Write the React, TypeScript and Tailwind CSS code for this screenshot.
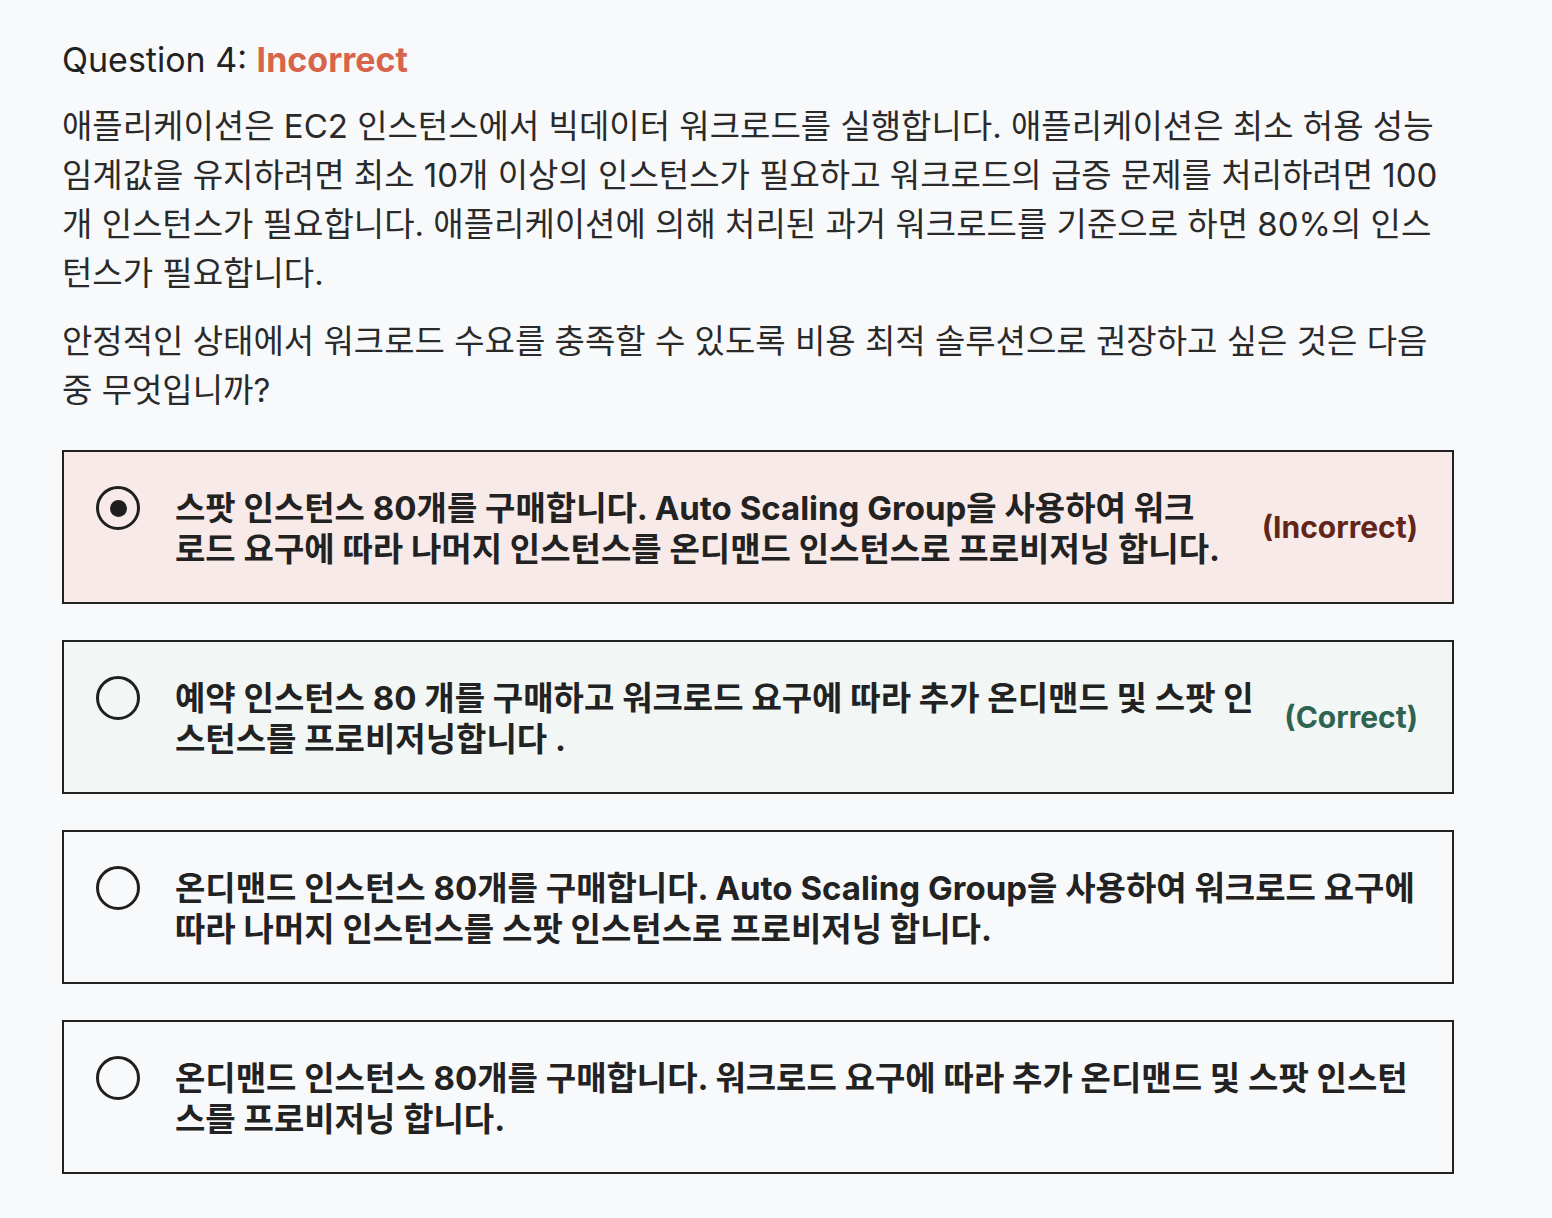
const font = { fontFamily: '"Inter", "Noto Sans CJK KR", sans-serif' };

type Option = {
  lines: string[];
  selected?: boolean;
  status?: "correct" | "incorrect";
};

const options: Option[] = [
  {
    lines: [
      "스팟 인스턴스 80개를 구매합니다. Auto Scaling Group을 사용하여 워크",
      "로드 요구에 따라 나머지 인스턴스를 온디맨드 인스턴스로 프로비저닝 합니다.",
    ],
    selected: true,
    status: "incorrect",
  },
  {
    lines: [
      "예약 인스턴스 80 개를 구매하고 워크로드 요구에 따라 추가 온디맨드 및 스팟 인",
      "스턴스를 프로비저닝합니다 .",
    ],
    status: "correct",
  },
  {
    lines: [
      "온디맨드 인스턴스 80개를 구매합니다. Auto Scaling Group을 사용하여 워크로드 요구에",
      "따라 나머지 인스턴스를 스팟 인스턴스로 프로비저닝 합니다.",
    ],
  },
  {
    lines: [
      "온디맨드 인스턴스 80개를 구매합니다. 워크로드 요구에 따라 추가 온디맨드 및 스팟 인스턴",
      "스를 프로비저닝 합니다.",
    ],
  },
];

function Radio({ selected }: { selected?: boolean }) {
  return (
    <div className="w-[44px] h-[44px] shrink-0 rounded-full border-[3px] border-[#1f1f1f] flex items-center justify-center">
      {selected && <div className="w-[17px] h-[17px] rounded-full bg-[#1f1f1f]" />}
    </div>
  );
}

function OptionCard({ option }: { option: Option }) {
  const bg =
    option.status === "incorrect"
      ? "bg-[#f8eae8]"
      : option.status === "correct"
        ? "bg-[#f2f6f5]"
        : "bg-[#f8f9fb]";

  return (
    <div className={`border-2 border-[#222] ${bg} flex items-center pl-[32px] pr-[34px] py-[34px] h-[154px]`}>
      <div className="flex items-start flex-1 gap-[35px] self-start min-w-0">
        <Radio selected={option.selected} />
        <p className="flex-1 text-[33px] leading-[41px] font-bold text-[#222] mt-[2px]">
          {option.lines.map((l, i) => (
            <span key={i} className="block whitespace-nowrap">
              {l}
            </span>
          ))}
        </p>
      </div>
      {option.status === "incorrect" && (
        <span className="ml-[40px] text-[30px] font-bold text-[#612619]">(Incorrect)</span>
      )}
      {option.status === "correct" && (
        <span className="ml-[40px] text-[30px] font-bold text-[#2f6351]">(Correct)</span>
      )}
    </div>
  );
}

export default function App() {
  return (
    <div className="min-h-[1218px] bg-[#f8f9fb] text-[#222]" style={font}>
      <div className="w-[1392px] ml-[62px] pt-[38px]">
        <h2 className="text-[34px] leading-[44px] text-[#222]">
          Question 4: <span className="font-bold text-[#d6654b]">Incorrect</span>
        </h2>
        <div className="mt-[20px] text-[33px] leading-[49px] text-[#2a2a2a]">
          <p>
            애플리케이션은 EC2 인스턴스에서 빅데이터 워크로드를 실행합니다. 애플리케이션은 최소 허용 성능 임계값을 유지하려면 최소 10개 이상의 인스턴스가 필요하고 워크로드의 급증 문제를 처리하려면 100개 인스턴스가 필요합니다. 애플리케이션에 의해 처리된 과거 워크로드를 기준으로 하면 80%의 인스턴스가 필요합니다.
          </p>
          <p className="mt-[19px]">
            안정적인 상태에서 워크로드 수요를 충족할 수 있도록 비용 최적 솔루션으로 권장하고 싶은 것은 다음 중 무엇입니까?
          </p>
        </div>
        <div className="mt-[35px] flex flex-col gap-[36px]">
          {options.map((o, i) => (
            <OptionCard key={i} option={o} />
          ))}
        </div>
      </div>
    </div>
  );
}
